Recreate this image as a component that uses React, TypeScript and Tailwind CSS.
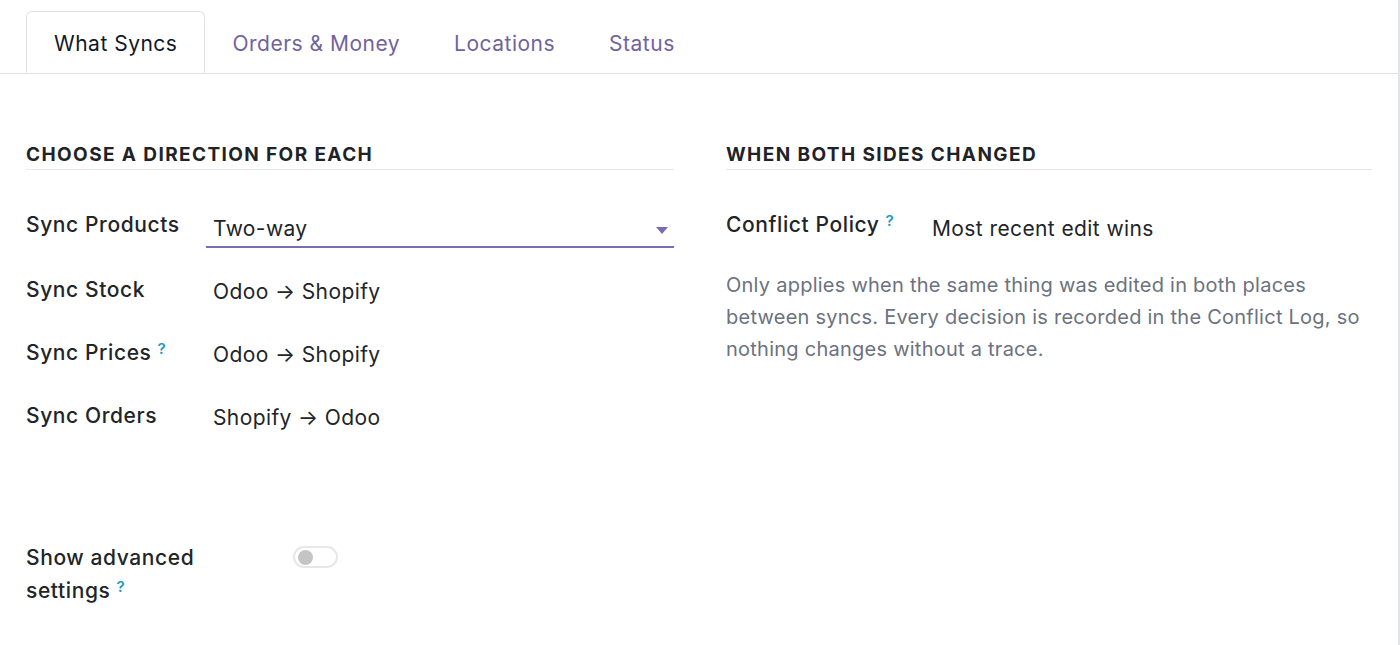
import React from "react";

const Q = () => (
  <sup className="ml-[6px] text-[15px] font-semibold text-[#1a9bc7] relative -top-[6px] tracking-normal">?</sup>
);

const label = "text-[21px] leading-[30px] font-medium tracking-[0.6px] text-[#212529]";
const value = "text-[21px] leading-[30px] tracking-[0.4px] text-[#212529]";
const tab = "h-[62px] px-[27px] pt-[3px] flex items-center text-[21px] tracking-[0.5px]";
const heading = "mt-[69px] pb-[2px] border-b border-[#e5e7eb] text-[19px] leading-[24px] font-bold tracking-[1.4px] text-[#1f2328]";

export default function App() {
  return (
    <div
      className="w-[1400px] h-[645px] bg-white border-r-2 border-[#e2e4e8] overflow-hidden text-[#212529]"
      style={{ fontFamily: "Inter, 'Noto Sans', sans-serif" }}
    >
      {/* Tabs */}
      <div className="flex pl-[26px] pt-[11px] border-b border-[#dee2e6]">
        <div className={`${tab} -mb-px border border-[#dee2e6] border-b-white rounded-t-[6px] bg-white text-[#111827]`}>
          What Syncs
        </div>
        <div className={`${tab} text-[#71639e]`}>Orders &amp; Money</div>
        <div className={`${tab} text-[#71639e]`}>Locations</div>
        <div className={`${tab} text-[#71639e]`}>Status</div>
      </div>

      <div className="flex px-[26px] gap-[52px]">
        {/* Left column */}
        <div className="w-[648px]">
          <div className={heading}>CHOOSE A DIRECTION FOR EACH</div>
          <div className="mt-[40px]">
            <div className="flex h-[65px]">
              <div className={`w-[180px] ${label}`}>Sync Products</div>
              <div className="flex-1 h-[38px] border-b-2 border-[#7c6bb0] flex items-start pt-[4px] pl-[7px] relative">
                <span className={value}>Two-way</span>
                <svg className="absolute right-[6px] top-[17px]" width="12" height="7" viewBox="0 0 12 7">
                  <path d="M0 0 L12 0 L6 7 Z" fill="#7c6bb0" />
                </svg>
              </div>
            </div>
            <div className="flex h-[63px]">
              <div className={`w-[180px] ${label}`}>Sync Stock</div>
              <div className={`pl-[7px] pt-[2px] ${value}`}>Odoo → Shopify</div>
            </div>
            <div className="flex h-[63px]">
              <div className={`w-[180px] ${label}`}>
                Sync Prices<Q />
              </div>
              <div className={`pl-[7px] pt-[2px] ${value}`}>Odoo → Shopify</div>
            </div>
            <div className="flex h-[63px]">
              <div className={`w-[180px] ${label}`}>Sync Orders</div>
              <div className={`pl-[7px] pt-[2px] ${value}`}>Shopify → Odoo</div>
            </div>
          </div>
          <div className="mt-[77px] flex">
            <div className="w-[200px] text-[21px] leading-[33px] font-medium tracking-[0.6px]">
              Show advanced
              <br />
              settings<Q />
            </div>
            <div className="ml-[67px] mt-[5px] w-[45px] h-[22px] rounded-full border-2 border-[#e5e7eb] bg-white flex items-center pl-[3px]">
              <div className="w-[15px] h-[15px] rounded-full bg-[#c4c4c4]" />
            </div>
          </div>
        </div>

        {/* Right column */}
        <div className="w-[646px]">
          <div className={heading}>WHEN BOTH SIDES CHANGED</div>
          <div className="mt-[40px] flex">
            <div className={`w-[206px] ${label}`}>
              Conflict Policy<Q />
            </div>
            <div className={`pt-[4px] ${value}`}>Most recent edit wins</div>
          </div>
          <p className="mt-[25px] text-[20px] leading-[32px] tracking-[0.25px] text-[#6b7280]">
            Only applies when the same thing was edited in both places between syncs. Every decision is recorded in the Conflict Log, so nothing changes without a trace.
          </p>
        </div>
      </div>
    </div>
  );
}
